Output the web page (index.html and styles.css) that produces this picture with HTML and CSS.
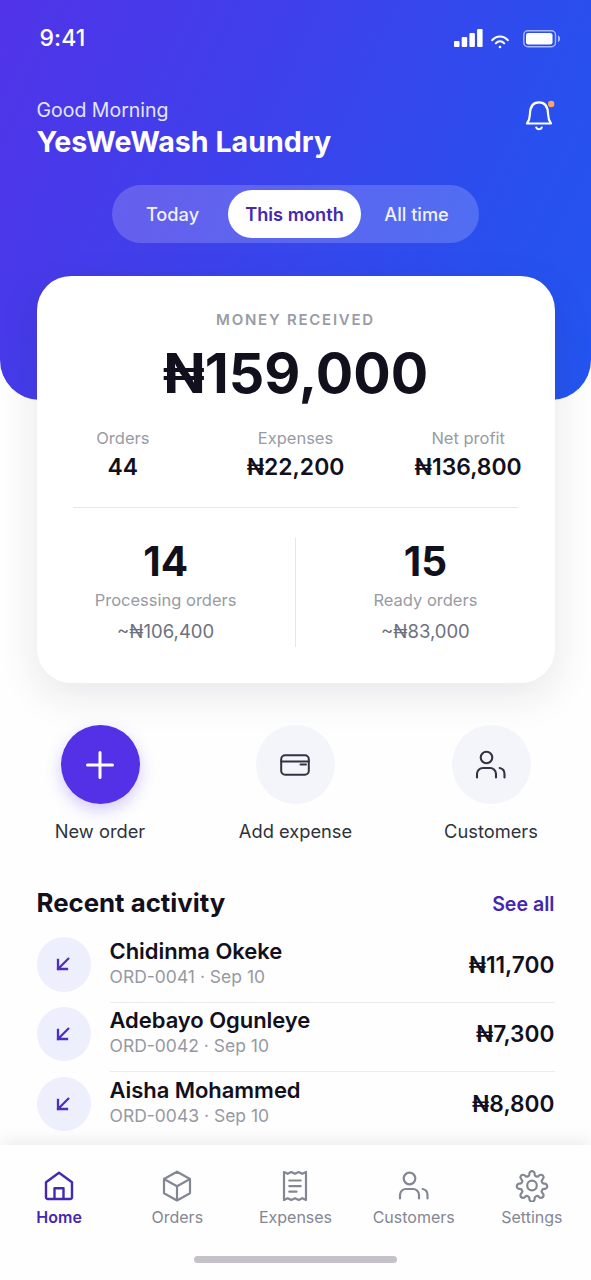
FILE: index.html
```html
<!DOCTYPE html>
<html lang="en">
<head>
<meta charset="utf-8">
<meta name="viewport" content="width=device-width, initial-scale=1">
<title>YesWeWash Laundry</title>
<link rel="stylesheet" href="styles.css">
</head>
<body>
<svg class="sprite" aria-hidden="true">
  <symbol id="people" viewBox="0 0 32 30">
    <circle cx="11.5" cy="7.5" r="5.8"/>
    <path d="M2 27.500v-3.500a6 6 0 0 1 6-6h7a6 6 0 0 1 6 6v3.500M24.700 18c2.900.6 4.800 3 4.800 6v3.500"/>
  </symbol>
  <symbol id="incoming" viewBox="0 0 14 14">
    <path d="M12.200 1.800 2 12M2 3v9h9"/>
  </symbol>
</svg>
<div class="screen">
  <header class="hero">
    <div class="status">
      <span class="clock">9:41</span>
      <div class="indicators">
        <svg class="signal" viewBox="0 0 29 18"><rect x="0" y="12" width="5.500" height="6" rx="1"/><rect x="7.700" y="8" width="5.500" height="10" rx="1"/><rect x="15.400" y="4" width="5.500" height="14" rx="1"/><rect x="23.100" y="0" width="5.500" height="18" rx="1"/></svg>
        <svg class="wifi" viewBox="0 0 18 14"><path d="M1.200 5.200C5.600.1 12.400.1 16.800 5.200M4.800 8.300c2.400-2.700 6-2.700 8.400 0"/><circle cx="9" cy="12" r="1.300"/></svg>
        <svg class="battery" viewBox="0 0 38 18"><rect class="shell" x=".8" y=".8" width="31.700" height="15.900" rx="4"/><rect x="3" y="3" width="26.500" height="11.500" rx="2.200"/><path class="tip" d="M35 5.500c2.800.7 2.800 5.800 0 6.500z"/></svg>
      </div>
    </div>
    <div class="greeting">
      <div>
        <p class="hello">Good Morning</p>
        <h1 class="shop">YesWeWash Laundry</h1>
      </div>
      <svg class="bell" viewBox="0 0 30 32"><path d="M2 23.500h24c-2-2.700-2.800-5-2.900-9C23 6.500 20 2.300 14 2.300S5 6.500 4.900 14.500c-.1 4-.9 6.300-2.900 9zM11.300 27.600c1 2.200 4.400 2.200 5.400 0"/><circle cx="26.200" cy="4" r="3.200"/></svg>
    </div>
    <div class="tabs">
      <span class="tab today">Today</span>
      <span class="tab active">This month</span>
      <span class="tab all">All time</span>
    </div>
  </header>

  <section class="card">
    <p class="eyebrow">MONEY RECEIVED</p>
    <p class="total">₦159,000</p>
    <div class="stats">
      <div class="stat"><span class="label">Orders</span><strong class="value">44</strong></div>
      <div class="stat"><span class="label">Expenses</span><strong class="value">₦22,200</strong></div>
      <div class="stat"><span class="label">Net profit</span><strong class="value">₦136,800</strong></div>
    </div>
    <div class="queues">
      <div class="queue"><strong class="count">14</strong><span class="label wide">Processing orders</span><span class="estimate">~₦106,400</span></div>
      <div class="split"></div>
      <div class="queue"><strong class="count">15</strong><span class="label wide">Ready orders</span><span class="estimate">~₦83,000</span></div>
    </div>
  </section>

  <section class="actions">
    <div class="action"><span class="disc primary"><svg class="plus" viewBox="0 0 28 28"><path d="M14 1.500v25M1.500 14h25"/></svg></span><span class="caption new">New order</span></div>
    <div class="action"><span class="disc"><svg class="wallet" viewBox="0 0 30 22"><rect x="1.200" y="1.200" width="27.600" height="19.600" rx="4"/><path d="M1.200 7.600h27.600M20.500 10.500h5.500"/></svg></span><span class="caption expense">Add expense</span></div>
    <div class="action"><span class="disc"><svg class="people"><use href="#people"/></svg></span><span class="caption">Customers</span></div>
  </section>

  <section class="activity">
    <div class="heading"><h2 class="title">Recent activity</h2><span class="more">See all</span></div>
    <div class="row"><span class="badge"><svg class="arrow"><use href="#incoming"/></svg></span><div class="entry"><div class="who"><span class="name">Chidinma Okeke</span><span class="meta">ORD-0041 · Sep 10</span></div><span class="amount">₦11,700</span></div></div>
    <div class="row"><span class="badge"><svg class="arrow"><use href="#incoming"/></svg></span><div class="entry"><div class="who"><span class="name">Adebayo Ogunleye</span><span class="meta">ORD-0042 · Sep 10</span></div><span class="amount">₦7,300</span></div></div>
    <div class="row"><span class="badge"><svg class="arrow"><use href="#incoming"/></svg></span><div class="entry"><div class="who"><span class="name">Aisha Mohammed</span><span class="meta">ORD-0043 · Sep 10</span></div><span class="amount">₦8,800</span></div></div>
  </section>

  <nav class="nav">
    <div class="items">
      <div class="item current"><svg class="icon" viewBox="0 0 32 32"><path d="M3 12.200 16 2.800l13 9.400v15a1.800 1.800 0 0 1-1.800 1.800H4.800A1.800 1.800 0 0 1 3 27.200zM11.500 28.500V18.300h9v10.200"/></svg><span>Home</span></div>
      <div class="item"><svg class="icon" viewBox="0 0 32 32"><path d="M16 1.700 29 9v14.300l-13 7.200-13-7.200V9zM3 9l13 7.200L29 9M16 16.200v14.300"/></svg><span>Orders</span></div>
      <div class="item"><svg class="icon" viewBox="0 0 32 32"><path d="M5 2l3.700 1.800L12.300 2 16 3.800 19.700 2l3.600 1.800L27 2v28l-3.700-1.800L19.700 30 16 28.200 12.300 30l-3.600-1.800L5 30zM10.300 10.500h11.400M10.300 16.200h11.400M10.300 21.700h7.200"/></svg><span>Expenses</span></div>
      <div class="item"><svg class="icon people-nav"><use href="#people"/></svg><span>Customers</span></div>
      <div class="item"><svg class="icon gear" viewBox="0 0 34 32"><circle cx="17" cy="15.5" r="4.800"/><path transform="translate(0 .3)" d="M14.400 3.700A2.620 2.620 0 1 1 19.600 3.700A2.450 2.450 0 0 0 23.860 5.470A2.620 2.620 0 1 1 27.530 9.140A2.450 2.450 0 0 0 29.300 13.400A2.620 2.620 0 1 1 29.300 18.600A2.450 2.450 0 0 0 27.530 22.860A2.620 2.620 0 1 1 23.860 26.530A2.450 2.450 0 0 0 19.600 28.300A2.620 2.620 0 1 1 14.400 28.300A2.450 2.450 0 0 0 10.140 26.530A2.620 2.620 0 1 1 6.470 22.860A2.450 2.450 0 0 0 4.700 18.600A2.620 2.620 0 1 1 4.700 13.400A2.450 2.450 0 0 0 6.470 9.140A2.620 2.620 0 1 1 10.140 5.470A2.450 2.450 0 0 0 14.400 3.700z"/></svg><span>Settings</span></div>
    </div>
    <div class="grabber"></div>
  </nav>
</div>
</body>
</html>
```
FILE: styles.css
```css
* { box-sizing: border-box; }
body { margin: 0; background: #fefefe; font-family: Inter, "Liberation Sans", sans-serif; color: #12101d; }
h1, h2, p { margin: 0; }
svg { display: block; flex: none; fill: none; stroke: currentColor; stroke-linecap: round; stroke-linejoin: round; }
.sprite { position: absolute; width: 0; height: 0; }
.screen { display: flex; flex-direction: column; width: 591px; height: 1280px; overflow: hidden; white-space: nowrap; }

.hero { flex: none; height: 400px; padding-top: 23px; border-radius: 0 0 40px 40px; background: linear-gradient(115deg, #5133e8 0%, #3f40eb 38%, #2850ef 80%, #2355f0 100%); color: #fff; }
.status { display: flex; justify-content: space-between; align-items: center; height: 30px; padding: 0 30px 0 39.500px; }
.clock { font-size: 23px; font-weight: 500; letter-spacing: .1px; }
.indicators { display: flex; align-items: flex-start; height: 18px; }
.signal { width: 29px; height: 18px; fill: #fff; stroke: none; }
.wifi { width: 18px; height: 14px; margin: 6px 14px 0 8px; stroke-width: 2; }
.wifi circle { fill: #fff; stroke: none; }
.battery { width: 38px; height: 18px; margin-top: 1px; fill: #fff; stroke: none; }
.battery .shell { fill: none; stroke: rgba(255,255,255,.6); stroke-width: 1.400; }
.battery .tip { fill: rgba(255,255,255,.6); }

.greeting { display: flex; justify-content: space-between; align-items: flex-start; padding: 43px 36.500px 0 36.500px; }
.hello { font-size: 19.500px; line-height: 28px; color: #e4e5ff; }
.shop { font-size: 28.600px; line-height: 36px; font-weight: 700; }
.bell { width: 30px; height: 32px; margin: 4px 0 0; stroke-width: 2.200; }
.bell circle { fill: #ffa45e; stroke: none; }
.tabs { display: flex; width: 367px; height: 58px; margin: 24.500px auto 0; padding: 5px; border-radius: 29px; background: rgba(255,255,255,.18); font-size: 18.200px; line-height: 48px; text-align: center; font-weight: 500; color: #f1f1ff; }
.today { width: 111px; }
.active { width: 133px; border-radius: 24px; background: #fff; color: #4429b0; font-weight: 600; }
.all { flex: 1; padding-right: 2px; }

.card { flex: none; width: 518px; height: 406.500px; margin: -124px auto 0; padding-top: 32.500px; border-radius: 34px; background: #fff; text-align: center; box-shadow: 0 12px 40px rgba(25,25,55,.1); }
.eyebrow { font-size: 15px; line-height: 22px; font-weight: 600; letter-spacing: 1.750px; color: #989ca6; }
.total { margin-top: 10.500px; font-size: 55.600px; line-height: 64px; font-weight: 700; }
.stats { display: grid; grid-template-columns: repeat(3, 1fr); margin-top: 22px; }
.stat, .queue, .action, .item, .who { display: flex; flex-direction: column; }
.label { font-size: 16.500px; line-height: 22px; color: #989ba3; }
.value { margin-top: 4px; font-size: 22.900px; line-height: 28px; font-weight: 600; }
.queues { display: grid; grid-template-columns: 1fr 1.500px 1fr; margin: 26px 36.500px 0; border-top: 1.500px solid #e7e7e9; padding-top: 29.500px; }
.split { height: 109px; background: #e7e7e9; }
.queue { padding-top: 1px; }
.queue:first-child { margin-left: -36.500px; }
.queue:last-child { margin-right: -36.500px; }
.count { font-size: 40.500px; line-height: 46px; font-weight: 700; }
.wide { margin-top: 3px; line-height: 24px; }
.estimate { margin-top: 6.500px; font-size: 18.500px; line-height: 26px; color: #6d717f; }

.actions { display: grid; flex: none; grid-template-columns: repeat(3, 195.500px); justify-content: center; margin-top: 42.500px; }
.action { align-items: center; }
.disc { display: grid; place-items: center; width: 79px; height: 79px; border-radius: 50%; background: #f3f5fa; color: #303440; }
.primary { background: #5431e6; color: #fff; box-shadow: 0 6px 16px rgba(84,49,230,.25); }
.plus { width: 28px; height: 28px; stroke-width: 3; }
.wallet { width: 30px; height: 22px; margin-right: 2px; stroke-width: 2; }
.people { width: 32px; height: 30px; margin-right: 1px; stroke-width: 2.100; }
.caption { margin-top: 15px; font-size: 18.300px; line-height: 24px; color: #2e323b; }

.activity { flex: 1; padding: 43px 36.500px 0; min-height: 0; }
.heading { display: flex; justify-content: space-between; align-items: center; height: 32px; margin-bottom: 12px; }
.title { font-size: 25.800px; font-weight: 700; }
.more { padding-top: 4px; font-size: 19.600px; font-weight: 600; color: #4429b0; }
.row { display: flex; align-items: flex-start; height: 69.900px; }
.badge { display: grid; place-items: center; flex: none; width: 54.500px; height: 54.500px; margin: 7px 18.500px 0 0; border-radius: 50%; background: #eeeffd; color: #4c2ec1; }
.arrow { width: 14px; height: 14px; margin-right: 1px; stroke-width: 2.300; stroke-linecap: square; stroke-linejoin: miter; }
.entry { display: flex; flex: 1; height: 72.500px; justify-content: space-between; border-bottom: 1.500px solid #ececef; padding-top: 6.500px; }
.row:last-child .entry { border-bottom: 0; }
.name { font-size: 22px; line-height: 28px; font-weight: 600; letter-spacing: -.05px; }
.meta { font-size: 17.500px; line-height: 24px; color: #9699a2; }
.amount { font-size: 22.700px; line-height: 56px; font-weight: 600; }

.nav { position: relative; flex: none; height: 135.500px; padding-top: 25.500px; background: #fefefe; box-shadow: 0 -2px 18px rgba(20,20,40,.09); }
.items { display: grid; grid-template-columns: repeat(5, 1fr); }
.item { align-items: center; font-size: 16px; line-height: 22px; color: #838793; }
.icon { width: 32px; height: 32px; margin-bottom: 4px; stroke-width: 2.200; }
.gear { width: 34px; }
.current { color: #4429b0; font-weight: 600; }
.current .icon { stroke-width: 2.400; }
.grabber { width: 203px; height: 7px; margin: 28px auto 0; border-radius: 4px; background: #c4c1c8; }
```
